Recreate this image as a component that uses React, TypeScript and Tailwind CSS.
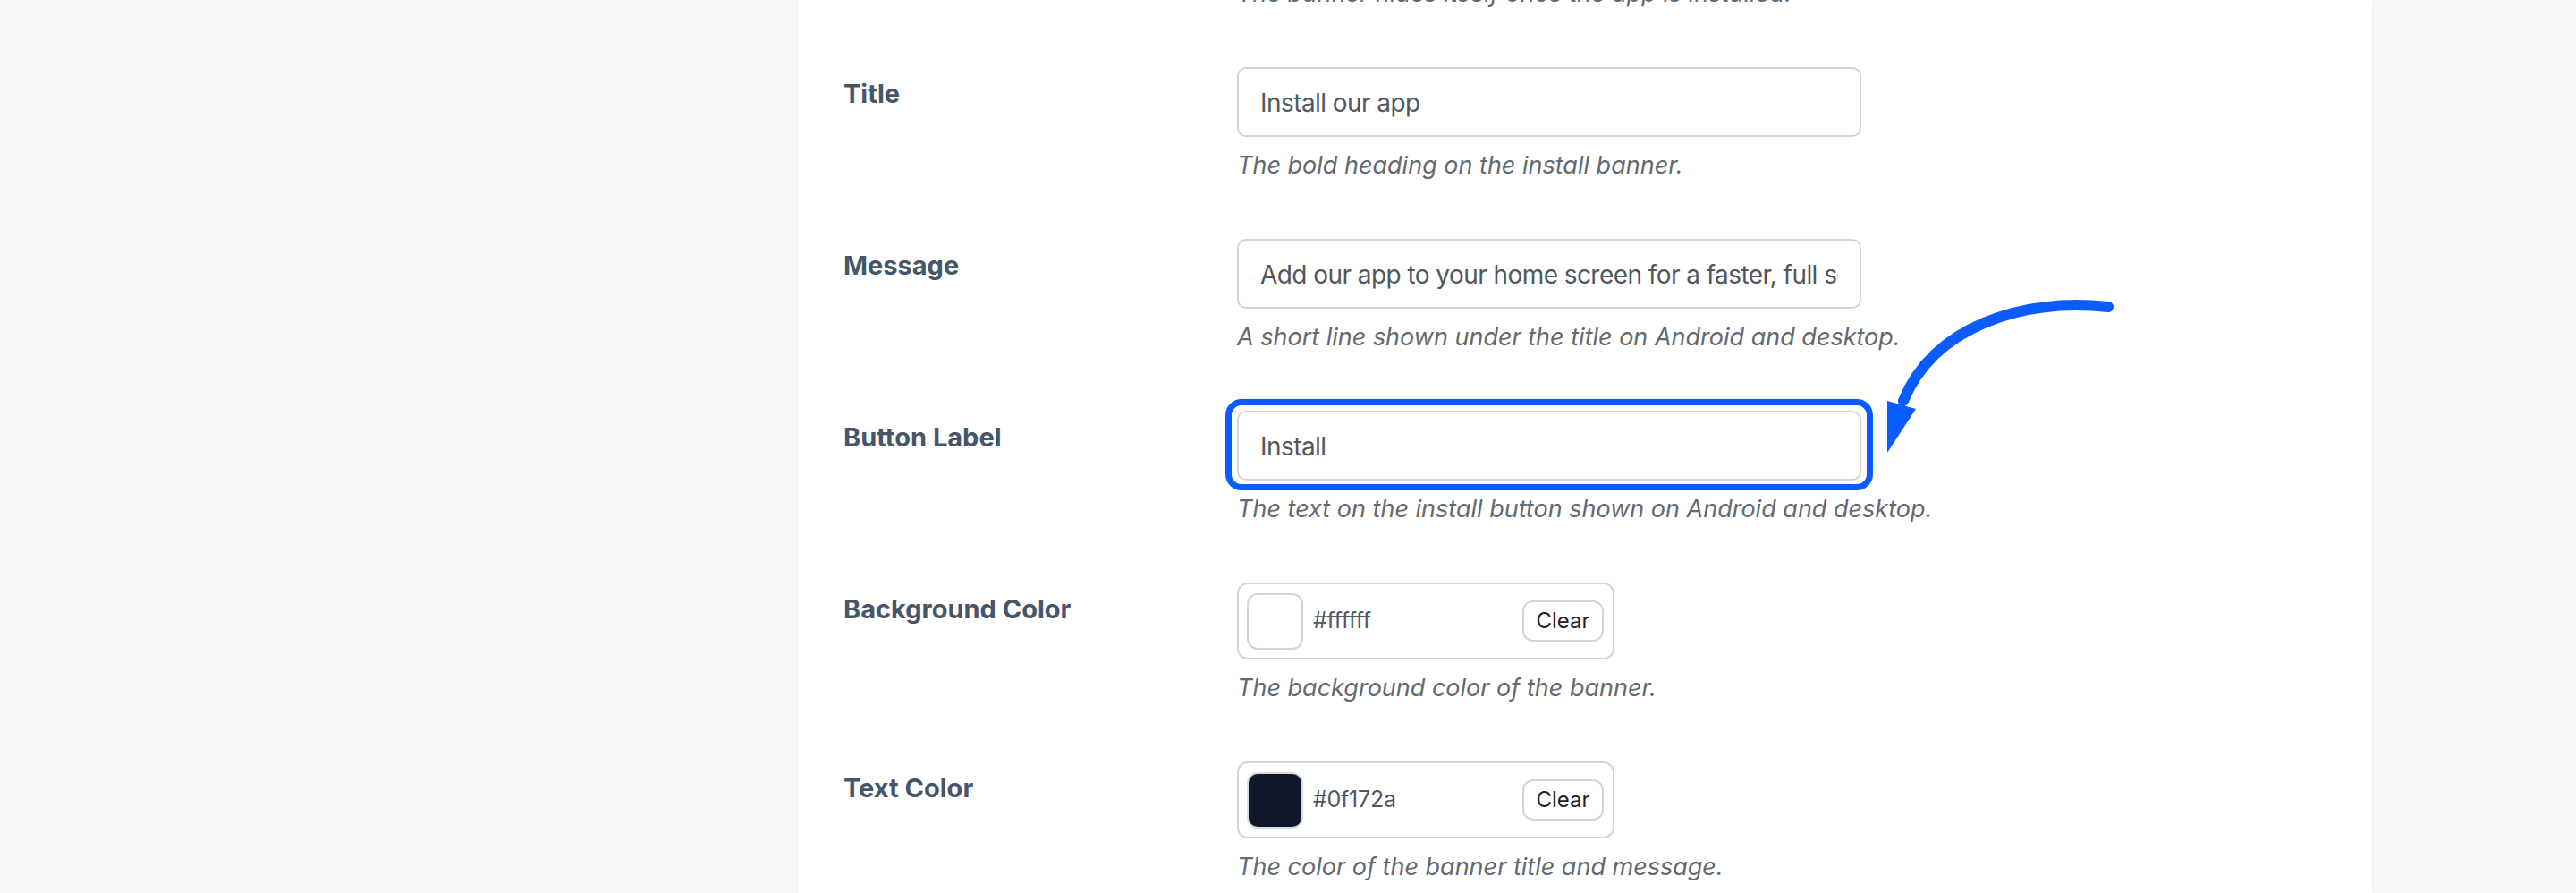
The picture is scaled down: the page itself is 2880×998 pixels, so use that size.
import React from "react";

const font = { fontFamily: "Inter, 'Noto Sans', 'Liberation Sans', sans-serif" };

function Label({ children }: { children: React.ReactNode }) {
  return (
    <div className="w-[440px] shrink-0 pt-[10px] text-[29px] leading-[40px] font-bold text-[#475569]">
      {children}
    </div>
  );
}

function Desc({ children }: { children: React.ReactNode }) {
  return (
    <p className="mt-[12px] text-[27px] leading-[39px] italic text-[#646970] whitespace-nowrap">
      {children}
    </p>
  );
}

function TextInput({ value }: { value: string }) {
  return (
    <input
      readOnly
      value={value}
      className="block w-[698px] h-[78px] px-[24px] pt-[2px] border-2 border-[#d4d4d6] rounded-[10px] bg-white text-[28px] tracking-[-0.02em] text-[#50575e] outline-none"
      style={font}
    />
  );
}

function ColorField({ value, swatch }: { value: string; swatch: string }) {
  return (
    <div className="flex items-center w-[422px] h-[86px] border-2 border-[#d4d4d6] rounded-[12px] bg-white pl-[9px] pr-[10px]">
      <div
        className={`w-[63px] h-[63px] rounded-[12px] border-2 shrink-0 ${
          swatch === "dark" ? "bg-[#0f172a] border-[#d8dbe0]" : "bg-white border-[#d4d4d6]"
        }`}
      />
      <span className="ml-[11px] text-[25px] tracking-[-0.01em] text-[#50575e]">{value}</span>
      <button className="ml-auto w-[91px] h-[46px] border-2 border-[#d4d4d6] rounded-[12px] bg-white text-[24px] text-[#1d2327]">
        Clear
      </button>
    </div>
  );
}

export default function App() {
  return (
    <div className="relative w-[2880px] h-[998px] overflow-hidden bg-[#f8f9fb]" style={font}>
      <div className="ml-[892px] w-[1760px] h-[998px] bg-white shadow-[0_0_6px_rgba(0,0,0,0.05)] flex flex-col">
        <div className="-mt-[27px] pl-[51px] flex flex-col gap-[63px]">
          <div className="flex">
            <div className="w-[440px] shrink-0" />
            <div>
              <p className="text-[27px] leading-[39px] italic text-[#646970] whitespace-nowrap">
                The banner hides itself once the app is installed.
              </p>
            </div>
          </div>

          <div className="flex">
            <Label>Title</Label>
            <div>
              <TextInput value="Install our app" />
              <Desc>The bold heading on the install banner.</Desc>
            </div>
          </div>

          <div className="flex">
            <Label>Message</Label>
            <div>
              <TextInput value="Add our app to your home screen for a faster, full screen experience." />
              <Desc>A short line shown under the title on Android and desktop.</Desc>
            </div>
          </div>

          <div className="flex">
            <Label>Button Label</Label>
            <div>
              <div className="relative w-[698px]">
                <TextInput value="Install" />
                <div className="absolute left-[-13px] right-[-13px] top-[-13px] bottom-[-11px] border-[7px] border-[#0b5cff] rounded-[18px] pointer-events-none" />
              </div>
              <Desc>The text on the install button shown on Android and desktop.</Desc>
            </div>
          </div>

          <div className="flex">
            <Label>Background Color</Label>
            <div>
              <ColorField value="#ffffff" swatch="light" />
              <Desc>The background color of the banner.</Desc>
            </div>
          </div>

          <div className="flex">
            <Label>Text Color</Label>
            <div>
              <ColorField value="#0f172a" swatch="dark" />
              <Desc>The color of the banner title and message.</Desc>
            </div>
          </div>
        </div>
      </div>

      <svg
        className="absolute left-0 top-0 pointer-events-none"
        width="2880"
        height="998"
        viewBox="0 0 2880 998"
      >
        <path
          d="M2357 343 C2260 333 2162 365 2128 448"
          fill="none"
          stroke="#0b5cff"
          strokeWidth="12"
          strokeLinecap="round"
        />
        <polygon points="2110,448 2142,457 2110,506" fill="#0b5cff" />
      </svg>
    </div>
  );
}
